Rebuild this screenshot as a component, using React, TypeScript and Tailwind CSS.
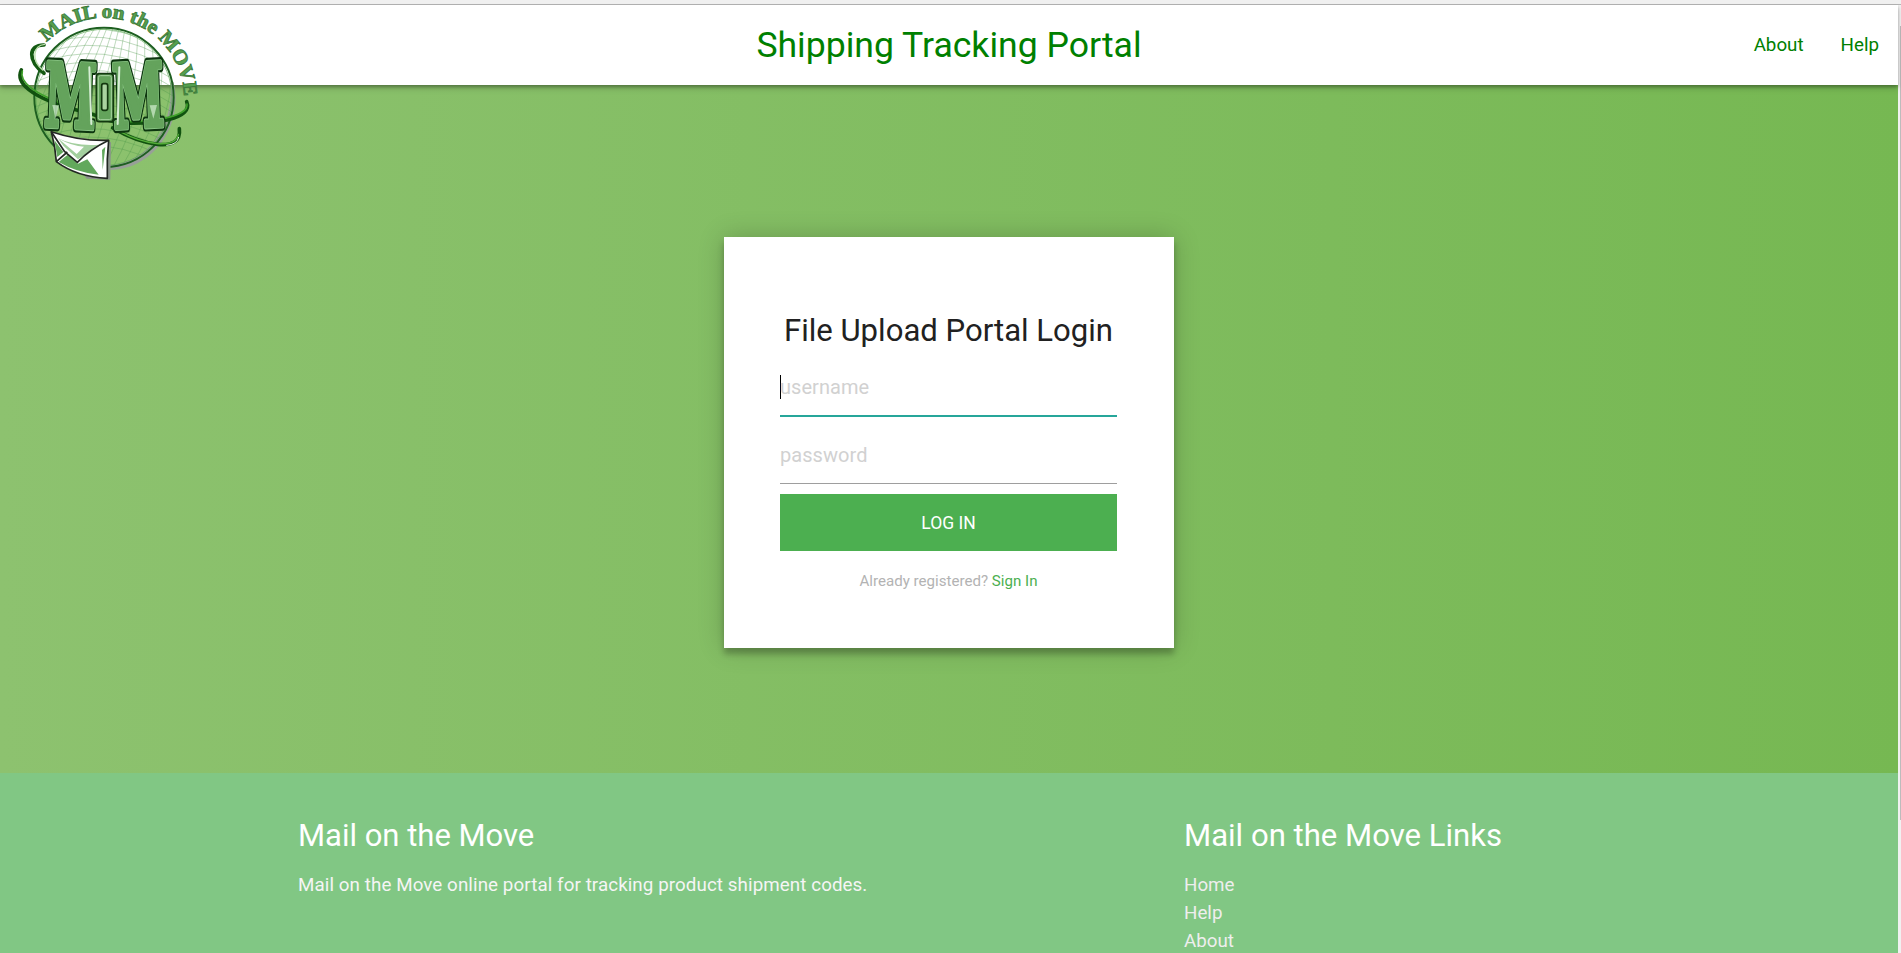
import React from "react";

const steps = [-190, -165, -140, -115, -90, -65, -40, -15, 10, 35, 60, 85, 110, 135, 160, 185];

function BigM() {
  return (
    <g transform="scale(.53 1)" fontSize="262" strokeLinejoin="round">
      <text fill="#0d360f" stroke="#0d360f" strokeWidth="30">M</text>
      <text fill="#8cc887" stroke="#8cc887" strokeWidth="17">M</text>
      <text fill="#64a35c" stroke="#64a35c" strokeWidth="12">M</text>
    </g>
  );
}

function Logo() {
  return (
    <svg viewBox="0 0 660 600" className="absolute left-0 top-0 h-[200px] w-[220px]" role="img" aria-label="Mail on the Move">
      <defs>
        <clipPath id="globe"><circle cx="312" cy="292" r="207" /></clipPath>
        <path id="arc" d="M140 127 A239 239 0 0 1 551 306" />
      </defs>
      <path d="M520 245 C552 370 465 506 332 510 L332 496 C440 484 520 390 512 250 Z" fill="#989f98" />
      <g clipPath="url(#globe)" fill="none" stroke="#4d984a" strokeOpacity="0.36" strokeWidth="3">
        {steps.map((y) => (
          <path key={y} d={`M90 ${292 + y} Q310 ${190 + y} 540 ${340 + y}`} />
        ))}
        {steps.map((x) => (
          <path key={x} d={`M${370 + x * 0.7} 75 Q${330 + x * 1.5} 290 ${250 + x} 510`} />
        ))}
      </g>
      <circle cx="312" cy="292" r="209" fill="none" stroke="#1d5f20" strokeWidth="6" />
      <circle cx="312" cy="292" r="204" fill="none" stroke="#5dab55" strokeWidth="2" />

      <g fill="none" strokeLinecap="round">
        <path d="M132 135 C84 134 82 182 132 220" stroke="#145a12" strokeWidth="11" />
        <path d="M134 133 C100 136 92 180 128 210" stroke="#b8dda9" strokeWidth="4" />
        <path d="M64 210 C46 248 90 290 220 328 C330 352 300 363 370 369 C460 373 582 358 560 305" stroke="#11520f" strokeWidth="11" />
        <path d="M67 213 C58 242 92 281 220 321 M340 363 C450 371 566 350 561 312" stroke="#3fa02b" strokeWidth="5" />
        <path d="M338 384 C420 432 548 466 538 386" stroke="#11520f" strokeWidth="11" />
        <path d="M360 395 C430 432 525 450 535 403" stroke="#54ad38" strokeWidth="4" />
        <path d="M500 436 Q532 434 536 412" stroke="#e3f2dc" strokeWidth="3" />
      </g>

      <g fontFamily="'DejaVu Serif', serif" fontWeight="700">
        <g transform="translate(131 377) skewY(3) skewX(-2)"><BigM /></g>
        <g transform="translate(341 385) skewY(-3) skewX(2)"><BigM /></g>
      </g>
      <path d="M268 202 L274 372 M358 202 L353 372" stroke="#d6edd4" strokeWidth="6" strokeLinecap="round" />
      <path d="M157 315 L167 356 L177 316 M449 316 L460 356 L471 315" fill="#c5e5c3" fillOpacity="0.8" />
      <rect x="289" y="221" width="51" height="144" rx="9" fill="#63a35b" stroke="#12380f" strokeWidth="5" />
      <rect x="295" y="227" width="39" height="132" rx="6" fill="none" stroke="#a7d3a0" strokeWidth="3" />
      <rect x="305" y="251" width="18" height="80" rx="6" fill="#a9d3a0" stroke="#12380f" strokeWidth="5" />

      <path d="M163 402 L333 427 L331 539 L260 536 Z" fill="#8b948b" />
      <path d="M154 395 Q240 424 326 421 Q320 475 322 535 Q230 531 169 485 Q166 440 154 395Z" fill="#fff" stroke="#222722" strokeWidth="5" strokeLinejoin="round" />
      <path d="M174 415 Q225 440 300 434 L234 478 L190 437Z" fill="#a3cf9e" />
      <path d="M174 415 Q218 440 252 440 L230 462 Z" fill="#fff" />
      <path d="M176 486 L203 464 L234 491 L262 478 L296 524 Q230 518 176 486Z M163 420 L190 456 L172 471Z M316 440 L308 510 L306 450Z" fill="#62a85c" />
      <path d="M154 395 L194 455 L232 487 Q270 448 326 421 M169 485 L202 456" fill="none" stroke="#222722" strokeWidth="5" strokeLinejoin="round" />

      <text fontFamily="'Liberation Serif', serif" fontWeight="700" fontSize="60" fill="#55a04f" stroke="#3c7a3a" strokeWidth="2.5">
        <textPath href="#arc" textLength="564" lengthAdjust="spacingAndGlyphs">MAIL on the MOVE</textPath>
      </text>
    </svg>
  );
}

export default function App() {
  return (
    <div className="flex h-[953px] w-full flex-col overflow-hidden bg-[#f0f0f0] font-['Roboto',sans-serif] text-[18.75px] leading-[28px]">
      <div className="h-[5px] shrink-0 border-b border-[#b4b4b4] bg-[#f0f0f0]" />
      <div className="flex min-h-0 flex-1">
        <div className="flex w-[1898px] flex-col bg-linear-to-l from-[#76b852] to-[#8dc26f]">
          <header className="z-10 grid h-[80px] shrink-0 grid-cols-3 items-center bg-white text-[#008000] shadow-[0_2px_3px_0_rgba(0,0,0,0.28),0_4px_6px_0_rgba(0,0,0,0.14)]">
            <div />
            <h1 className="text-center text-[35.6px] leading-[80px]">Shipping Tracking Portal</h1>
            <nav className="flex justify-end gap-[37px] pr-[19px] text-[18.75px]">
              <a>About</a>
              <a>Help</a>
            </nav>
          </header>
          <main className="flex h-[688px] shrink-0 items-start justify-center pt-[152px]">
            <form className="flex h-[411px] w-[450px] flex-col bg-white pl-[56px] pr-[57px] pt-[77px] shadow-[0_0_25px_0_rgba(0,0,0,0.2),0_6px_6px_0_rgba(0,0,0,0.24)]">
              <h2 className="text-center text-[31.1px] leading-[34px] text-[#212121]">File Upload Portal Login</h2>
              <div className="mt-[10px] flex h-[59px] items-center border-b-2 border-[#26a69a] text-[20px] tracking-[0.05px] text-[#d1d1d1]">
                <span className="-mr-px h-[24px] w-px bg-black" />
                <span>username</span>
              </div>
              <div className="mt-[9px] flex h-[58px] items-center border-b border-[#9e9e9e] text-[20px] tracking-[0.05px] text-[#d1d1d1]">password</div>
              <button type="button" className="mt-[10px] h-[57px] bg-[#4caf50] text-[17.5px] text-white">LOG IN</button>
              <p className="mt-[16px] text-center text-[15.1px] text-[#b3b3b3]">
                Already registered? <a className="text-[#4caf50]">Sign In</a>
              </p>
            </form>
          </main>
          <footer className="flex flex-1 bg-[#81c784] pl-[298px] pt-[46px] text-white">
            <section className="w-[886px]">
              <h3 className="text-[31px] leading-[34px]">Mail on the Move</h3>
              <p className="mt-[18px] text-[18.75px] tracking-[0.09px] text-[#f5f5f5]">Mail on the Move online portal for tracking product shipment codes.</p>
            </section>
            <section>
              <h3 className="text-[31.1px] leading-[34px]">Mail on the Move Links</h3>
              <ul className="mt-[18px] text-[18.75px] text-[#eeeeee]">
                <li>Home</li>
                <li>Help</li>
                <li>About</li>
              </ul>
            </section>
          </footer>
        </div>
        <div className="flex flex-1 justify-end bg-[#f1f1f1] pt-[21px]">
          <div className="h-[794px] w-px bg-[#bcbcbc]" />
        </div>
      </div>
      <div className="absolute left-0 top-0 z-20"><Logo /></div>
    </div>
  );
}
